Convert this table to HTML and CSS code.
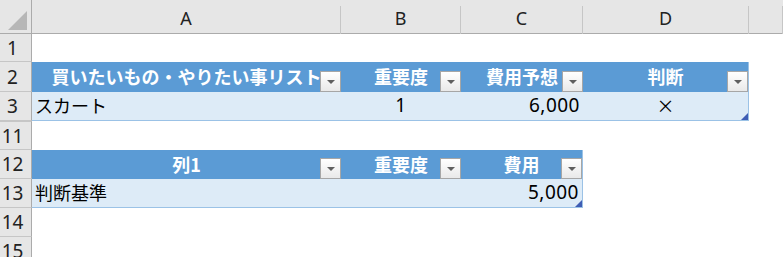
FILE: index.html
```html
<!DOCTYPE html>
<html lang="ja">
<head>
    <meta charset="UTF-8">
    <meta name="viewport" content="width=device-width, initial-scale=1.0">
    <title>買いたいもの・やりたい事リスト</title>
    <link rel="stylesheet" href="styles.css">
</head>
<body>
    <div class="sheet">
        <!-- 列見出し -->
        <div class="row col-heads">
            <div class="corner"><span class="corner-mark"></span></div>
            <div class="col-head">A</div>
            <div class="col-head">B</div>
            <div class="col-head">C</div>
            <div class="col-head">D</div>
            <div class="col-head"></div>
        </div>

        <div class="row r1">
            <div class="row-head">1</div>
            <div class="cell"></div>
            <div class="cell"></div>
            <div class="cell"></div>
            <div class="cell"></div>
            <div class="cell"></div>
        </div>

        <!-- テーブル1 -->
        <div class="row r2">
            <div class="row-head">2</div>
            <div class="cell th">買いたいもの・やりたい事リスト<span class="filter"></span></div>
            <div class="cell th">重要度<span class="filter"></span></div>
            <div class="cell th">費用予想<span class="filter"></span></div>
            <div class="cell th edge">判断<span class="filter"></span></div>
            <div class="cell"></div>
        </div>
        <div class="row">
            <div class="row-head">3</div>
            <div class="cell td">スカート</div>
            <div class="cell td center num">1</div>
            <div class="cell td right num">6,000</div>
            <div class="cell td center edge">×<span class="resize"></span></div>
            <div class="cell"></div>
        </div>

        <div class="row">
            <div class="row-head hidden-above">11</div>
            <div class="cell"></div>
            <div class="cell"></div>
            <div class="cell"></div>
            <div class="cell"></div>
            <div class="cell"></div>
        </div>

        <!-- テーブル2 -->
        <div class="row">
            <div class="row-head">12</div>
            <div class="cell th">列1<span class="filter"></span></div>
            <div class="cell th">重要度<span class="filter"></span></div>
            <div class="cell th edge">費用<span class="filter"></span></div>
            <div class="cell"></div>
            <div class="cell"></div>
        </div>
        <div class="row">
            <div class="row-head">13</div>
            <div class="cell td">判断基準</div>
            <div class="cell td"></div>
            <div class="cell td right num edge">5,000<span class="resize"></span></div>
            <div class="cell"></div>
            <div class="cell"></div>
        </div>

        <div class="row">
            <div class="row-head">14</div>
            <div class="cell"></div>
            <div class="cell"></div>
            <div class="cell"></div>
            <div class="cell"></div>
            <div class="cell"></div>
        </div>
        <div class="row">
            <div class="row-head">15</div>
            <div class="cell"></div>
            <div class="cell"></div>
            <div class="cell"></div>
            <div class="cell"></div>
            <div class="cell"></div>
        </div>
    </div>
</body>
</html>
```

FILE: styles.css
```css
* {
    box-sizing: border-box;
}

body {
    margin: 0;
    background-color: #ffffff;
    font-family: "Noto Sans CJK JP", "Noto Sans", sans-serif;
    color: #000;
}

.sheet {
    width: 783px;
    height: 257px;
    overflow: hidden;
}

.row {
    display: grid;
    grid-template-columns: 32px 309px 120px 122px 166px 1fr;
    height: 29px;
}

.r1 { height: 28px; }
.r2 { height: 30px; }

/* 列見出し */
.col-heads {
    height: 34px;
    background-color: #e6e6e6;
    border-bottom: 1px solid #ababab;
    padding-top: 6px;
}

.corner {
    position: relative;
    margin-top: -6px;
    border-right: 1px solid #ababab;
}

.corner-mark {
    position: absolute;
    left: 8px;
    top: 11px;
    width: 19px;
    height: 19px;
    background-color: #b7b7b7;
    clip-path: polygon(100% 0, 100% 100%, 0 100%);
}

.col-head {
    display: flex;
    align-items: center;
    justify-content: center;
    border-right: 1px solid #c6c6c6;
    font-family: "Noto Sans", sans-serif;
    font-size: 18px;
    color: #222;
    padding-bottom: 4px;
}

/* 行見出し */
.row-head {
    display: flex;
    align-items: center;
    justify-content: center;
    padding-right: 6px;
    background-color: #e6e6e6;
    border-right: 1px solid #ababab;
    border-bottom: 1px solid #c6c6c6;
    font-family: "Noto Sans", sans-serif;
    font-size: 19px;
    color: #222;
}

.hidden-above {
    border-top: 1px solid #c6c6c6;
}

.cell {
    position: relative;
    display: flex;
    align-items: center;
    font-size: 18px;
    white-space: nowrap;
    padding: 0 3px 2px;
}

/* テーブル */
.th {
    background-color: #5b9bd5;
    color: #fff;
    font-weight: bold;
    justify-content: center;
}

.td {
    background-color: #ddebf7;
    border-bottom: 1px solid #9bc2e6;
}

.edge {
    border-right: 1px solid #9bc2e6;
}

.center { justify-content: center; }
.right { justify-content: flex-end; }

.num {
    font-family: "Noto Sans", sans-serif;
    font-size: 19px;
    letter-spacing: 0.5px;
}

.filter {
    position: absolute;
    right: 0;
    bottom: 0;
    width: 21px;
    height: 21px;
    border: 1px solid #a6a6a6;
    background: linear-gradient(#ffffff, #e9e9e9);
}

.filter::after {
    content: "";
    position: absolute;
    left: 6px;
    top: 8px;
    border-left: 4px solid transparent;
    border-right: 4px solid transparent;
    border-top: 4px solid #5f5f5f;
}

.resize {
    position: absolute;
    right: 0;
    bottom: 0;
    width: 7px;
    height: 7px;
    background-color: #3f5db4;
    clip-path: polygon(100% 0, 100% 100%, 0 100%);
}
```
